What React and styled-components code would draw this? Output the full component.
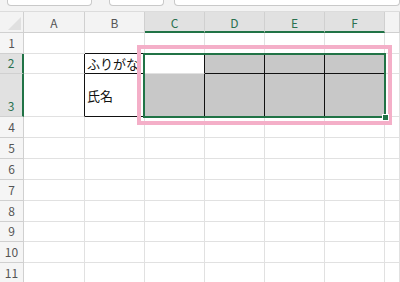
import React from "react";
import styled, { createGlobalStyle } from "styled-components";

const Global = createGlobalStyle`
  html, body { margin: 0; padding: 0; background: #fff; overflow: hidden; }
  * { box-sizing: border-box; }
`;

const GREEN = "#217346";
const GRID = "#e1e1e1";
const HEAD_LINE = "#d0d0d0";
const FILL = "#c8c8c8";

const Page = styled.div`
  position: relative;
  width: 400px;
  height: 282px;
  overflow: hidden;
  background: #fff;
  font-family: "Noto Sans CJK JP", "Noto Sans", sans-serif;
`;

const Toolbar = styled.div`
  display: flex;
  align-items: flex-start;
  height: 12px;
  padding-left: 7px;
  background: #f3f3f3;
  border-bottom: 1px solid #dcdcdc;
`;

const Field = styled.div`
  width: ${(p) => p.$w};
  height: 6px;
  margin-right: ${(p) => p.$mr || 0}px;
  background: #fff;
  border: 1px solid #c9c9c9;
  border-top: none;
  border-radius: 0 0 4px 4px;
  flex: ${(p) => (p.$grow ? 1 : "none")};
`;

const Sheet = styled.div`
  display: grid;
  grid-template-columns: 24px 61px repeat(5, 60px) 1fr;
  grid-template-rows: 21px 21px 20px 43px 21px 21px 21px 21px 21px 20px 21px 21px;
`;

const Corner = styled.div`
  position: relative;
  background: #f3f3f3;
  border-right: 1px solid ${HEAD_LINE};
  border-bottom: 1px solid ${HEAD_LINE};
  &::after {
    content: "";
    position: absolute;
    right: 2px;
    bottom: 2px;
    width: 0;
    height: 0;
    border-left: 13px solid transparent;
    border-bottom: 13px solid #e0e0e0;
  }
`;

const ColHead = styled.div`
  display: flex;
  align-items: center;
  justify-content: center;
  font-size: 12px;
  padding-top: 1px;
  color: ${(p) => (p.$sel ? "#2a7150" : "#555")};
  background: ${(p) => (p.$sel ? "#e1e1e1" : "#f3f3f3")};
  border-right: 1px solid ${HEAD_LINE};
  border-bottom: ${(p) => (p.$sel ? `2px solid ${GREEN}` : `1px solid ${HEAD_LINE}`)};
`;

const RowHead = styled.div`
  display: flex;
  align-items: flex-end;
  justify-content: center;
  font-size: 12px;
  line-height: 20px;
  color: ${(p) => (p.$sel ? "#2a7150" : "#555")};
  background: ${(p) => (p.$sel ? "#e1e1e1" : "#f5f5f5")};
  border-right: ${(p) => (p.$sel ? `2px solid ${GREEN}` : `1px solid ${HEAD_LINE}`)};
  border-bottom: 1px solid ${HEAD_LINE};
`;

const Cell = styled.div`
  display: flex;
  align-items: center;
  padding-left: 2px;
  font-size: 13px;
  color: #111;
  white-space: nowrap;
  overflow: visible;
  background: ${(p) => (p.$fill ? FILL : "#fff")};
  border-right: 1px solid ${(p) => p.$rb || GRID};
  border-bottom: 1px solid ${(p) => p.$bb || GRID};
`;

const Selection = styled.div`
  position: absolute;
  left: 143px;
  top: 53px;
  width: 243px;
  height: 65px;
  border: 2px solid ${GREEN};
  pointer-events: none;
`;

const Handle = styled.div`
  position: absolute;
  right: -5px;
  bottom: -5px;
  width: 7px;
  height: 7px;
  background: ${GREEN};
  border: 1px solid #fff;
`;

const Highlight = styled.div`
  position: absolute;
  left: 137px;
  top: 45px;
  width: 255px;
  height: 80px;
  border: 4px solid #f4afc8;
  pointer-events: none;
`;

const COLS = ["A", "B", "C", "D", "E", "F"];
const ROWS = [1, 2, 3, 4, 5, 6, 7, 8, 9, 10, 11];
const K = "#111";

function cellProps(r, c) {
  const p = {};
  if (r === 1 && c >= 1 && c <= 5) p.$bb = K;
  if (r === 2 || r === 3) {
    if (c >= 0 && c <= 5) p.$rb = K;
    if (r === 3 && c >= 1 && c <= 5) p.$bb = K;
    if (r === 2 && (c === 1 || c >= 3)) p.$bb = K;
    if (c >= 3 && c <= 5) p.$fill = true;
    if (r === 3 && c === 2) p.$fill = true;
  }
  return p;
}

const TEXT = { "2-1": "ふりがな", "3-1": "氏名" };

export default function App() {
  return (
    <Page>
      <Global />
      <Toolbar>
        <Field $w="85px" $mr={17} />
        <Field $w="55px" $mr={10} />
        <Field $grow />
      </Toolbar>
      <Sheet>
        <Corner />
        {COLS.map((c, i) => (
          <ColHead key={c} $sel={i >= 2}>
            {c}
          </ColHead>
        ))}
        <ColHead />
        {ROWS.map((r) => (
          <React.Fragment key={r}>
            <RowHead $sel={r === 2 || r === 3}>{r}</RowHead>
            {COLS.map((c, ci) => (
              <Cell key={c} {...cellProps(r, ci)}>
                {TEXT[`${r}-${ci}`] || ""}
              </Cell>
            ))}
            <Cell />
          </React.Fragment>
        ))}
      </Sheet>
      <Highlight />
      <Selection>
        <Handle />
      </Selection>
    </Page>
  );
}
